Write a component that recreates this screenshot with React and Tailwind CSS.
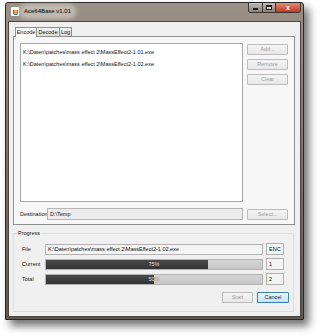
const files = [
  'K:\\Daten\\patches\\mass effect 2\\MassEffect2-1.01.exe',
  'K:\\Daten\\patches\\mass effect 2\\MassEffect2-1.02.exe',
]

function SideButton({ children, disabled, focused, className = '' }) {
  return (
    <div
      className={`flex h-[11px] items-center justify-center rounded-[1px] border text-[5.5px] ${
        focused
          ? 'border-[#3c7fb1] bg-gradient-to-b from-[#eaf6fd] to-[#bee6fd] text-[#222]'
          : 'border-[#bcbcbc] bg-gradient-to-b from-[#f4f4f4] to-[#e8e8e8]'
      } ${disabled ? 'text-[#a0a0a0]' : ''} ${className}`}
    >
      {children}
    </div>
  )
}

function Bar({ pct }) {
  return (
    <div className="relative h-[11px] w-[218px] border border-[#b2b2b2] bg-gradient-to-b from-[#d6d6d6] to-[#c6c6c6]">
      <div className="h-full bg-gradient-to-b from-[#4a4a4a] to-[#333]" style={{ width: `${pct}%` }} />
      <div className="absolute inset-0 flex items-center justify-center text-[5.5px] text-white [text-shadow:0_0_1px_#000]">
        {pct}%
      </div>
    </div>
  )
}

function SmallBox({ children }) {
  return (
    <div className="flex h-[12px] w-[18px] items-center border border-[#b0b0b0] bg-[#f4f4f4] pl-[2px] text-[5.5px]">
      {children}
    </div>
  )
}

export default function App() {
  return (
    <div className="h-[336px] w-[320px] bg-white pl-[5px] pt-[2px] font-['Liberation_Sans',Arial,sans-serif] text-[#111]">
      <div className="flex h-[318px] w-[299px] flex-col rounded-t-[3px] border border-[#2c2a28] bg-gradient-to-b from-[#9a9288] via-[#7a726a] to-[#5e5751] px-[2px] pb-[2px] shadow-[5px_6px_8px_rgba(0,0,0,0.55)]">
        {/* title bar */}
        <div className="flex h-[18px] items-start">
          <div className="mt-[4px] flex items-center gap-[3px] pl-[3px]">
            <div className="flex h-[9px] w-[8px] items-end justify-center rounded-[1px] bg-white">
              <div className="mb-[1px] h-[5px] w-[5px] rounded-b-[2px] border-[1.5px] border-t-0 border-[#3a6fb0] bg-[#f2a441]" />
            </div>
            <span className="rounded-[4px] bg-[#d8d3cc]/60 px-[2px] text-[6px] text-black shadow-[0_0_4px_3px_rgba(230,226,220,0.55)]">
              Ace64Base v1.01
            </span>
          </div>
          <div className="ml-auto flex h-[10px] overflow-hidden rounded-b-[3px] border border-t-0 border-[#3a3532]">
            <div className="flex w-[13px] items-end justify-center bg-gradient-to-b from-[#c2bbb3] to-[#8a827a] pb-[2px]">
              <div className="h-[2px] w-[5px] border border-[#222] bg-white" />
            </div>
            <div className="flex w-[13px] items-center justify-center border-l border-[#3a3532] bg-gradient-to-b from-[#c2bbb3] to-[#8a827a]">
              <div className="h-[5px] w-[6px] border border-[#222] border-t-2 bg-white/60" />
            </div>
            <div className="flex w-[25px] items-center justify-center border-l border-[#3a3532] bg-gradient-to-b from-[#e08a78] to-[#c0361f] text-[7px] font-bold leading-none text-white">
              x
            </div>
          </div>
        </div>

        {/* client */}
        <div className="flex flex-1 flex-col border border-[#4a4540] bg-[#f0f0f0] px-[4px] pt-[5px]">
          {/* tabs */}
          <div className="flex h-[9px] items-end pl-[2px] text-[5.5px]">
            <div className="relative z-10 -mb-px flex h-[10px] w-[22px] items-center justify-center border border-b-0 border-[#8e8f8f] bg-[#fbfbfb]">
              Encode
            </div>
            <div className="flex h-[9px] w-[23px] items-center justify-center border border-b-0 border-l-0 border-[#8e8f8f] bg-gradient-to-b from-[#f2f2f2] to-[#dcdcdc]">
              Decode
            </div>
            <div className="flex h-[9px] w-[12px] items-center justify-center border border-b-0 border-l-0 border-[#8e8f8f] bg-gradient-to-b from-[#f2f2f2] to-[#dcdcdc]">
              Log
            </div>
          </div>
          <div className="flex h-[189px] w-[282px] flex-col border border-[#8e8f8f] bg-[#f7f7f7] px-[6px] pt-[6px]">
            <div className="flex gap-[4px]">
              <div className="h-[159px] w-[224px] border border-[#a8a8a8] bg-white pl-[2px] pt-[3px] text-[5.5px]">
                {files.map((f) => (
                  <div key={f} className="h-[12px] leading-[10px]">
                    {f}
                  </div>
                ))}
              </div>
              <div className="flex w-[41px] flex-col gap-[4px] pt-px">
                <SideButton disabled>Add...</SideButton>
                <SideButton disabled>Remove</SideButton>
                <SideButton disabled>Clear</SideButton>
              </div>
            </div>
            <div className="mt-[6px] flex items-center gap-[4px]">
              <span className="w-[23px] text-[5.5px]">Destination</span>
              <div className="flex h-[12px] w-[197px] items-center border border-[#b5b5b5] bg-[#ececec] pl-[2px] text-[5.5px]">
                D:\Temp
              </div>
              <SideButton disabled className="w-[41px]">
                Select...
              </SideButton>
            </div>
          </div>

          {/* progress group */}
          <div className="relative mt-[8px] flex h-[79px] w-[281px] flex-col border border-[#d5dfe5] pl-[8px] pr-[4px] pt-[9px]">
            <span className="absolute -top-[4px] left-[3px] bg-[#f0f0f0] px-px text-[5.5px] leading-[7px]">
              Progress
            </span>
            <div className="flex flex-col gap-[3px]">
              <div className="flex items-center gap-[3px]">
                <span className="w-[20px] text-[5.5px]">File</span>
                <div className="flex h-[11px] w-[218px] items-center border border-[#b2b2b2] bg-[#f4f4f4] pl-[2px] text-[5.5px]">
                  K:\Daten\patches\mass effect 2\MassEffect2-1.02.exe
                </div>
                <SmallBox>ENC</SmallBox>
              </div>
              <div className="flex items-center gap-[3px]">
                <span className="w-[20px] text-[5.5px]">Current</span>
                <Bar pct={75} />
                <SmallBox>1</SmallBox>
              </div>
              <div className="flex items-center gap-[3px]">
                <span className="w-[20px] text-[5.5px]">Total</span>
                <Bar pct={50} />
                <SmallBox>2</SmallBox>
              </div>
            </div>
            <div className="mt-[7px] flex justify-end gap-[4px]">
              <SideButton disabled className="w-[31px]">
                Start
              </SideButton>
              <SideButton focused className="w-[32px]">
                Cancel
              </SideButton>
            </div>
          </div>
        </div>
      </div>
    </div>
  )
}
